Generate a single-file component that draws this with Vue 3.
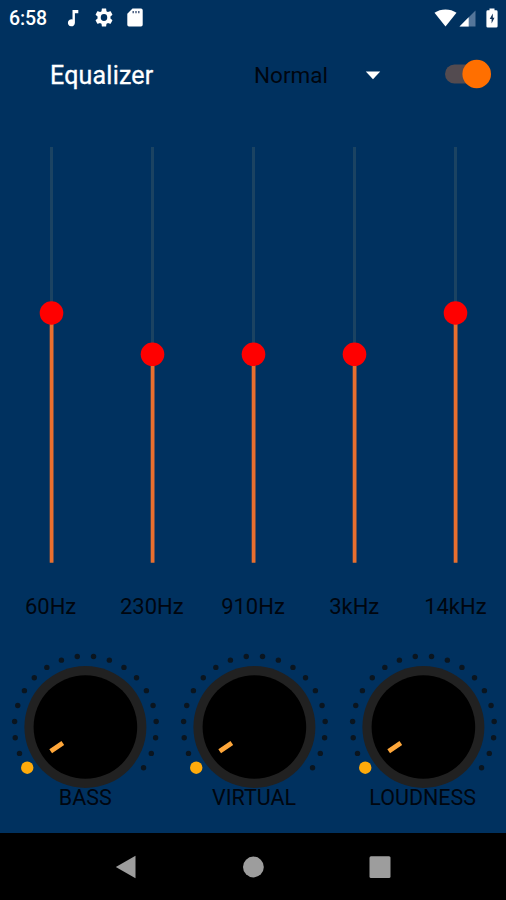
<script setup>
const bands = [
  { label: '60Hz', y: 166 },
  { label: '230Hz', y: 207.3 },
  { label: '910Hz', y: 207.3 },
  { label: '3kHz', y: 207.3 },
  { label: '14kHz', y: 166 },
]
const knobs = ['BASS', 'VIRTUAL', 'LOUDNESS']
const dots = Array.from({ length: 20 }, (_, i) => {
  const a = ((-125 + (i * 250) / 19) * Math.PI) / 180
  return { x: Math.sin(a) * 71, y: -Math.cos(a) * 71 }
})
</script>

<template>
  <div class="screen">
    <header class="status">
      <span class="time">6:58</span>
      <svg class="note" width="12" height="18" viewBox="0 0 12 18"><path d="M5.5 1H11.3V4.2H7.9V13.8A3.5 3.5 0 1 1 5.5 10.5Z" fill="#fff" /></svg>
      <svg class="gear" width="18" height="19" viewBox="2 2 20 20" preserveAspectRatio="none"><path fill="#fff" fill-rule="evenodd" d="M19.14 12.94c.04-.3.06-.61.06-.94 0-.32-.02-.64-.07-.94l2.03-1.58c.18-.14.23-.41.12-.61l-1.92-3.32c-.12-.22-.37-.29-.59-.22l-2.39.96c-.5-.38-1.03-.7-1.62-.94l-.36-2.54c-.04-.24-.24-.41-.48-.41h-3.84c-.24 0-.43.17-.47.41l-.36 2.54c-.59.24-1.13.57-1.62.94l-2.39-.96c-.22-.08-.47 0-.59.22L2.74 8.87c-.12.21-.08.47.12.61l2.03 1.58c-.05.3-.09.63-.09.94s.02.64.07.94l-2.03 1.58c-.18.14-.23.41-.12.61l1.92 3.32c.12.22.37.29.59.22l2.39-.96c.5.38 1.03.7 1.62.94l.36 2.54c.05.24.24.41.48.41h3.84c.24 0 .44-.17.47-.41l.36-2.54c.59-.24 1.13-.56 1.62-.94l2.39.96c.22.08.47 0 .59-.22l1.92-3.32c.12-.22.07-.47-.12-.61l-2.01-1.58zM12 15.6A3.6 3.6 0 1 1 12 8.4a3.6 3.6 0 0 1 0 7.2z" /></svg>
      <svg class="card" width="16" height="19" viewBox="0 0 16 19"><path d="M5.5.5H14A1.7 1.7 0 0 1 15.7 2.2V16.8A1.7 1.7 0 0 1 14 18.5H2A1.7 1.7 0 0 1 .3 16.8V5.7Z" fill="#fff" /><path d="M6.2 3V5.2M9 3V5.2M11.8 3V5.2" stroke="#405579" stroke-width="1.4" /></svg>
      <span class="space"></span>
      <svg class="wifi" width="23" height="18" viewBox="0 0 23 18"><path d="M.5 3.8C6.5-.7 16.5-.7 22.5 3.8L11.5 17.5Z" fill="#fff" /></svg>
      <svg class="signal" width="17" height="17" viewBox="0 0 17 17"><path d="M16.5.5V16.5H.5Z" fill="#55769a" /><path d="M9.7 7.3V16.5H.5Z" fill="#fff" /></svg>
      <svg class="battery" width="12" height="20" viewBox="0 0 12 20"><path d="M3.5.5H8.5V2.3H10.2A1.4 1.4 0 0 1 11.6 3.7V18.2A1.4 1.4 0 0 1 10.2 19.6H1.8A1.4 1.4 0 0 1 .4 18.2V3.7A1.4 1.4 0 0 1 1.8 2.3H3.5Z" fill="#fff" /><path d="M6.8 5.5 3.7 10.9H5.6V15.5L8.5 9.8H6.8Z" fill="#123258" /></svg>
    </header>

    <div class="toolbar">
      <h1>Equalizer</h1>
      <span class="preset">Normal</span>
      <svg class="caret" width="16" height="9" viewBox="0 0 16 9"><path d="M.8.5H15.2L8 8.2Z" fill="#fff" /></svg>
      <svg class="toggle" width="48" height="32" viewBox="0 0 48 32"><rect x="1" y="6.5" width="42" height="19" rx="9.5" fill="#534b50" /><circle cx="32.7" cy="16" r="14.3" fill="#ff6f00" /></svg>
    </div>

    <main class="bands">
      <div v-for="b in bands" :key="b.label" class="band">
        <svg width="30" height="416" viewBox="0 0 30 416">
          <rect x="14" y="0" width="3" height="416" fill="#1b4362" />
          <rect x="13.7" :y="b.y" width="3.8" :height="415.7 - b.y" fill="#e96f2e" />
          <circle cx="15.5" :cy="b.y" r="11.8" fill="#ff0000" />
        </svg>
        <span>{{ b.label }}</span>
      </div>
    </main>

    <section class="knobs">
      <div v-for="k in knobs" :key="k" class="knob">
        <svg width="154" height="138" viewBox="-77.4 -77 154 138">
          <circle v-for="(d, i) in dots.slice(1)" :key="i" :cx="d.x" :cy="d.y" r="2.7" fill="#0a151f" />
          <circle r="61" fill="#212121" />
          <circle r="51.8" fill="#000" />
          <path d="M-34.7 24.2 L-22.6 15.9" stroke="#ffa73a" stroke-width="4.8" />
          <circle :cx="dots[0].x" :cy="dots[0].y" r="6.2" fill="#ffab0b" />
        </svg>
        <span>{{ k }}</span>
      </div>
    </section>

    <nav>
      <svg width="22" height="24" viewBox="0 0 22 24"><path d="M.8 12 20.5.7V23.3Z" fill="#9d9d9d" /></svg>
      <svg width="22" height="22" viewBox="0 0 22 22"><circle cx="11.4" cy="11" r="10.4" fill="#9d9d9d" /></svg>
      <svg width="22" height="22" viewBox="0 0 22 22"><rect x=".5" y=".3" width="21" height="21.6" rx="1.5" fill="#9d9d9d" /></svg>
    </nav>
  </div>
</template>

<style>
body {
  margin: 0;
}
</style>

<style scoped>
.screen {
  width: 506px;
  height: 900px;
  display: flex;
  flex-direction: column;
  background: #00315f;
  color: #00060f;
  font-family: Roboto, sans-serif;
  overflow: hidden;
}
svg {
  display: block;
  flex: none;
}
.status {
  height: 35px;
  padding: 0 8px 0 9px;
  box-sizing: border-box;
  display: flex;
  align-items: center;
}
.time {
  width: 57.5px;
  color: #fff;
  font-size: 19.5px;
  font-weight: 500;
  line-height: 20px;
  letter-spacing: -0.1px;
  padding-top: 2px;
}
.gear {
  margin-left: 16.5px;
}
.card {
  margin-left: 14px;
}
.space {
  flex: 1;
}
.signal {
  margin: 2px 10px 0 2px;
}
.toolbar {
  height: 80px;
  box-sizing: border-box;
  padding-left: 50px;
  display: flex;
  align-items: center;
}
h1 {
  width: 204px;
  margin: 0;
  color: #fff;
  font-size: 25px;
  font-weight: 400;
  line-height: 30px;
  letter-spacing: 0.2px;
  padding-top: 1px;
  -webkit-text-stroke: 0.3px #fff;
}
.preset {
  width: 111px;
  font-size: 22.5px;
  line-height: 30px;
}
.toggle {
  margin: -3px 0 0 63px;
}
.bands {
  display: grid;
  grid-template-columns: repeat(5, 1fr);
  padding: 32px 0 0;
}
.band,
.knob {
  display: flex;
  flex-direction: column;
  align-items: center;
}
.band span {
  margin-top: 31px;
  font-size: 22px;
  line-height: 26px;
}
.knobs {
  display: grid;
  grid-template-columns: repeat(3, 1fr);
  padding: 30px 0 0 1px;
  margin-right: -1px;
}
.knob span {
  margin-top: -3px;
  font-size: 21.5px;
  line-height: 26px;
}
nav {
  height: 67px;
  margin-top: auto;
  background: #000;
  display: flex;
  align-items: center;
  justify-content: center;
  gap: 105px;
}
</style>
